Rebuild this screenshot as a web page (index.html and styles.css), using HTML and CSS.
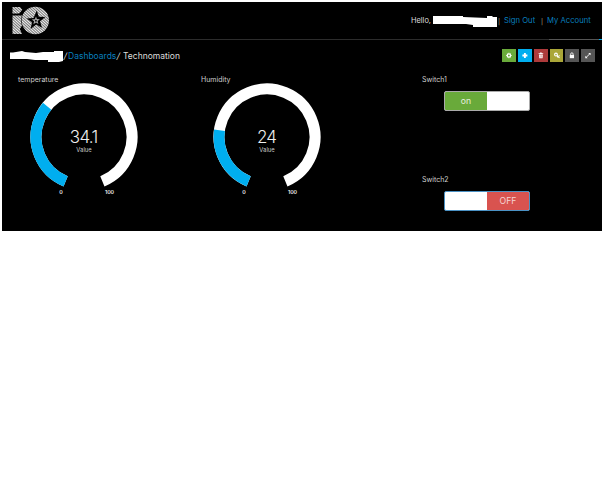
FILE: index.html
```html
<!DOCTYPE html>
<html lang="en">
<head>
<meta charset="utf-8">
<title>Technomation</title>
<link rel="stylesheet" href="styles.css">
</head>
<body>
<main class="panel">
  <header class="header">
    <svg class="logo" width="38" height="29" viewBox="0 0 38 29">
      <defs>
        <pattern id="stripes" width="2" height="2" patternUnits="userSpaceOnUse" patternTransform="rotate(42)">
          <rect width="2" height="2" fill="#666"/>
          <rect width="2" height="1.1" fill="#eee"/>
        </pattern>
      </defs>
      <path fill="url(#stripes)" d="M.5 1H8l2.3 2.8L7.200 7.600H.5zM.5 9.500H10a14 14 0 0 0 0 10L7.800 23 10 28H.5z"/>
      <circle cx="23.300" cy="14.500" r="13.700" fill="url(#stripes)"/>
      <path fill="#000" d="M24.800 4.500l2 6.200 6.600.3-5.300 4.200 1.900 6.600-5.800-3.400-5.600 4.500 1.400-6.700-5.500-3.700 7-.5z"/>
      <path fill="#aaa" d="M24 10.500l.9 2.600 3 .2-2.300 1.800.8 2.900-2.500-1.600-2.500 1.800.7-3-2.400-1.700 3.100-.2z"/>
      <circle cx="23.900" cy="14.700" r="1" fill="#111"/>
    </svg>
    <nav class="nav">
      <span class="hello">Hello,</span>
      <svg class="name-mask" width="65" height="14" viewBox="0 0 65 14"><path fill="#fff" d="M0 2h30v1l24 1V2h5l1 1h4v10H40v-2l-7-1H0z"/></svg>
      <span class="bar">|</span>
      <a class="sign-out">Sign Out</a>
      <span class="bar bar-second">|</span>
      <a class="account">My Account</a>
    </nav>
  </header>
  <div class="toolbar">
    <div class="crumbs">
      <svg width="54" height="14" viewBox="0 0 54 14"><path fill="#fff" d="M0 3.500h3l9-1.500 3 1 11 1 7-1h11V2h9v10l-4 1H38v-2H25l-8-1H0z"/></svg>
      <span class="slash">/</span>
      <a class="crumb-link">Dashboards</a>
      <span class="slash slash-second">/</span>
      <span class="current">Technomation</span>
    </div>
    <div class="tools">
      <span class="tool green"><svg viewBox="0 0 14 14"><circle cx="7" cy="7" r="1.800" fill="none" stroke="#fff" stroke-width="1.500"/><path stroke="#fff" stroke-width=".9" d="M7 4v1M7 9v1M4 7h1M9 7h1M4.900 4.900l.7.7M8.400 8.400l.7.7M4.900 9.100l.7-.7M8.400 5.600l.7-.7"/></svg></span>
      <span class="tool cyan"><svg viewBox="0 0 14 14"><path stroke="#fff" stroke-width="2" d="M4.300 7h5.400M7 4.300v5.400"/></svg></span>
      <span class="tool red"><svg viewBox="0 0 14 14"><path fill="#fff" d="M4.500 4.600h1.400l.4-.7h1.400l.4.7h1.400v.9h-5zM4.900 5.900h4.200L8.800 10H5.200z"/><path stroke="#ad3a3b" stroke-width=".4" d="M6.300 6.700v2.600M7.700 6.700v2.600"/></svg></span>
      <span class="tool olive"><svg viewBox="0 0 14 14"><circle cx="6" cy="6" r="1.500" fill="none" stroke="#fff" stroke-width="1.200"/><path fill="none" stroke="#fff" stroke-width="1.200" d="M7 7l2.800 2.500M8 8.200l-.7.700M9 7.500l.8-.5"/></svg></span>
      <span class="tool grey"><svg viewBox="0 0 14 14"><path fill="#fff" d="M4.700 6.400h4.600V9.900H4.700z"/><path fill="none" stroke="#fff" stroke-width=".9" d="M5.700 6.600V5.400a1.300 1.300 0 0 1 2.600 0v1.200"/></svg></span>
      <span class="tool grey"><svg viewBox="0 0 14 14"><path fill="#fff" d="M7.400 4.200h2.500v2.500zM4.200 7.400v2.500h2.500z"/><path stroke="#fff" stroke-width="1" d="M5 9.200L9.200 5"/></svg></span>
    </div>
  </div>
  <div class="widgets">
    <section class="widget temperature">
      <h2 class="title">temperature</h2>
      <svg class="gauge" width="120" height="118" viewBox="-60 -55 120 118">
        <circle class="track" r="48" pathLength="360" stroke-dasharray="315 45" transform="rotate(112.5)"/>
        <circle class="level" r="48" pathLength="360" stroke-dasharray="107.4 252.6" transform="rotate(112.5)"/>
        <text class="number" y="6" textLength="28.500">34.1</text>
        <text class="unit" y="14.500" textLength="15.500">Value</text>
        <text class="limit" x="-23" y="56.500">0</text>
        <text class="limit" x="25.500" y="56.500" textLength="9">100</text>
      </svg>
    </section>
    <section class="widget humidity">
      <h2 class="title">Humidity</h2>
      <svg class="gauge" width="120" height="118" viewBox="-60 -55 120 118">
        <circle class="track" r="48" pathLength="360" stroke-dasharray="315 45" transform="rotate(112.5)"/>
        <circle class="level" r="48" pathLength="360" stroke-dasharray="75.6 284.4" transform="rotate(112.5)"/>
        <text class="number" y="6" textLength="20">24</text>
        <text class="unit" y="14.500" textLength="15.500">Value</text>
        <text class="limit" x="-23" y="56.500">0</text>
        <text class="limit" x="25.500" y="56.500" textLength="9">100</text>
      </svg>
    </section>
    <div class="switches">
      <section class="switch-widget">
        <h2 class="title">Switch1</h2>
        <div class="switch"><span class="half on">on</span><span class="half"></span></div>
      </section>
      <section class="switch-widget">
        <h2 class="title">Switch2</h2>
        <div class="switch focused"><span class="half"></span><span class="half off">OFF</span></div>
      </section>
    </div>
  </div>
</main>
</body>
</html>
```
FILE: styles.css
```css
* { box-sizing: border-box; }
body { margin: 0; padding: 2px; background: #fff; font-family: Inter, "Open Sans", sans-serif; }
.panel { width: 600px; height: 229px; background: #000; color: #ddd; overflow: hidden; }
.header { display: flex; justify-content: space-between; height: 38px; padding: 4px 0 0 10px; border-bottom: 1px solid; border-image: linear-gradient(90deg, #2c2c2c 91%, #555 91% 99.300%, #00aeef 99.300%) 1; }
.logo { display: block; }
.nav { display: flex; align-items: center; height: 28px; width: 191px; font-size: 7.7px; white-space: nowrap; }
.nav > * { flex: none; }
.hello { width: 22px; font-size: 7.4px; }
.name-mask { display: block; margin-top: 2px; }
.bar { width: 6px; font-size: 6px; color: #c9b98c; padding-top: 2px; }
.sign-out { width: 37px; }
.bar-second { width: 6px; }
a { color: #087fbd; }
.toolbar { display: flex; justify-content: space-between; height: 32px; padding: 8px 7px 0 8px; }
.crumbs { display: flex; align-items: center; height: 16px; font-size: 8.5px; white-space: nowrap; }
.slash { width: 4px; transform: skewX(-12deg); }
.crumb-link { width: 49px; }
.slash-second { width: 6px; }
.tools { display: flex; gap: 2px; padding-top: 1px; }
.tool { width: 13.8px; height: 13px; }
.tool svg { display: block; width: 100%; height: 13px; }
.green { background: #69aa3a; }
.cyan { background: #00aeef; }
.red { background: #ad3a3b; }
.olive { background: #aaa638; }
.grey { background: #555; }
.widgets { display: flex; padding-left: 16px; }
.widget { width: 183px; height: 150px; padding-top: 3px; }
.title { margin: 0; height: 10px; font-size: 7px; line-height: 10px; font-weight: 400; color: #d0d0d0; }
.gauge { display: block; margin: -3px 0 0 6px; }
.humidity { width: 221px; }
.track, .level { fill: none; stroke-width: 11; stroke: #fff; }
.level { stroke: #00aeef; }
.number { fill: #eee; font-size: 17px; font-weight: 300; text-anchor: middle; }
.unit { fill: #ccc; font-size: 5.8px; text-anchor: middle; }
.limit { fill: #eee; font-size: 5.3px; font-weight: 600; text-anchor: middle; }
.switch-widget { height: 100px; padding-top: 3px; }
.switch { display: flex; width: 86px; height: 20px; margin: 6px 0 0 22px; border: 1px solid #aaa; border-radius: 2px; background: #fff; overflow: hidden; }
.switch.focused { border-color: #4a91c4; }
.half { width: 43px; line-height: 19px; text-align: center; font-size: 8.7px; color: #e6efdf; }
.on { background: #69aa3a; }
.off { background: #d9534f; color: #f5d5d4; }
```
